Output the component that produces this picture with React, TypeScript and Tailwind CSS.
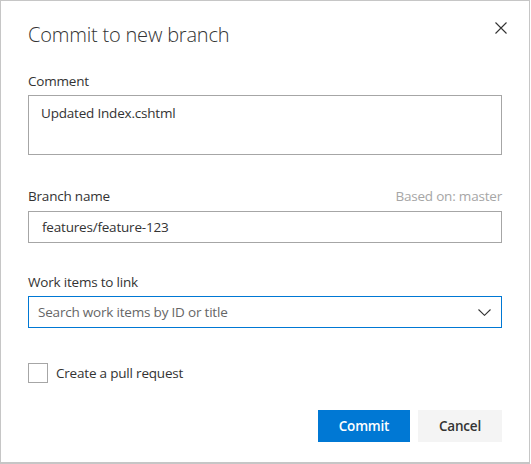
export default function App() {
  return (
    <div className="w-[531px] h-[464px] bg-white font-['Open_Sans',sans-serif] text-[#333333]">
      <div className="relative w-[530px] h-[464px] border border-b-2 border-[#c6c6c6] px-[27px] pt-[20px]">
        <button className="absolute right-[21px] top-[20px] w-[14px] h-[14px] flex items-center justify-center text-[#333]">
          <svg width="12" height="12" viewBox="0 0 12 12" fill="none" stroke="currentColor" strokeWidth="1.1">
            <path d="M0.5 0.5 L11.5 11.5 M11.5 0.5 L0.5 11.5" />
          </svg>
        </button>
        <h1 className="text-[20px] leading-[28px] font-light tracking-[-0.2px]">Commit to new branch</h1>

        <div className="mt-[22px] text-[13.5px] tracking-[-0.2px]">
          <label className="block leading-[20px]">Comment</label>
          <div className="mt-[4px] h-[60px] border border-[#a6a6a6] px-[12px] pt-[7px] leading-[20px]">
            Updated Index.cshtml
          </div>
        </div>

        <div className="mt-[31px] text-[13.5px] tracking-[-0.2px]">
          <div className="flex justify-between leading-[20px]">
            <span>Branch name</span>
            <span className="text-[#a6a6a6]">Based on: master</span>
          </div>
          <div className="mt-[5px] h-[32px] border border-[#a6a6a6] px-[13px] flex items-center">
            features/feature-123
          </div>
        </div>

        <div className="mt-[29px] text-[13.5px] tracking-[-0.2px]">
          <label className="block leading-[20px]">Work items to link</label>
          <div className="mt-[4px] h-[32px] border border-[#0078d4] pl-[9px] pr-[10px] flex items-center justify-between">
            <span className="text-[#666666]">Search work items by ID or title</span>
            <svg width="13" height="7" viewBox="0 0 13 7" fill="none" stroke="#333" strokeWidth="1.1">
              <path d="M0.5 0.5 L6.5 6.3 L12.5 0.5" />
            </svg>
          </div>
        </div>

        <div className="mt-[35px] flex items-center gap-[8px] text-[13.5px] tracking-[-0.2px]">
          <div className="w-[20px] h-[20px] border border-[#a6a6a6]" />
          <span className="leading-[20px]">Create a pull request</span>
        </div>

        <div className="mt-[27px] flex justify-end gap-[8px] text-[13.5px] tracking-[-0.2px]">
          <button className="w-[92px] h-[32px] bg-[#0078d4] text-white font-semibold">Commit</button>
          <button className="w-[84px] h-[32px] bg-[#f4f4f4] text-[#333] font-semibold">Cancel</button>
        </div>
      </div>
    </div>
  );
}
